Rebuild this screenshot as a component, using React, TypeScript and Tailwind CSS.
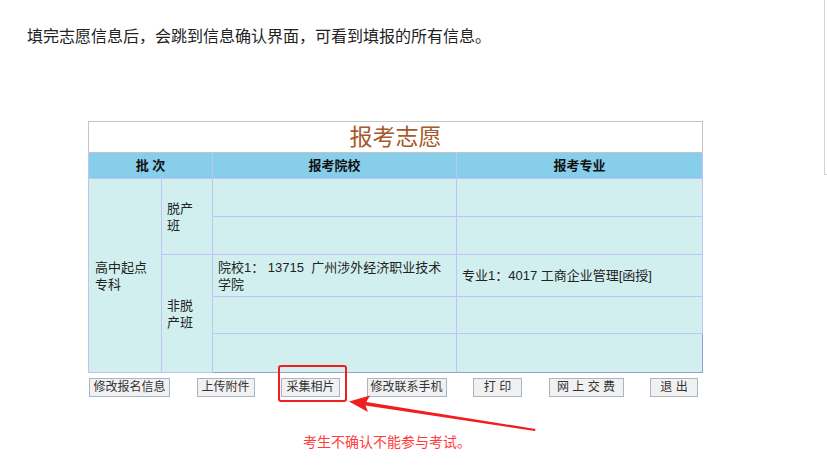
const cjk = '"Liberation Sans", "Noto Sans CJK SC", sans-serif';

const buttons = ["修改报名信息", "上传附件", "采集相片", "修改联系手机", "打 印", "网 上 交 费", "退 出"];
const widths = ["w-[81px]", "w-[58px]", "w-[59px]", "w-[80px]", "w-[49px]", "w-[75px]", "w-[48px]"];

const cell = "border border-[#c2c2f6] align-middle";

export default function App() {
  return (
    <div className="relative h-[476px] w-[827px] overflow-hidden bg-white" style={{ fontFamily: cjk }}>
      {/* page divider on the right */}
      <div className="absolute left-[824px] top-0 h-[175px] w-[3px] border-b border-l border-[#d2d2d2]" />

      <p className="pl-[27px] pt-[27px] text-[16px] leading-[20px] text-[#222]">
        填完志愿信息后，会跳到信息确认界面，可看到填报的所有信息。
      </p>

      <div className="ml-[88px] mt-[74px] w-[614px]">
        <table className="w-[614px] table-fixed border-collapse border border-[#a9a9c9] text-[13px] leading-[17px] text-[#222]">
          <colgroup>
            <col className="w-[73px]" />
            <col className="w-[51px]" />
            <col className="w-[244px]" />
            <col className="w-[246px]" />
          </colgroup>
          <tbody>
            <tr className="h-[31px] bg-white">
              <td colSpan={4} className="border border-[#c4c4c4] text-center text-[23px] leading-[30px] text-[#a5592c]">
                报考志愿
              </td>
            </tr>
            <tr className="h-[26px] bg-[#87ceeb] font-bold text-[#111]">
              <td colSpan={2} className={`${cell} text-center`}>批 次</td>
              <td className={`${cell} text-center`}>报考院校</td>
              <td className={`${cell} text-center`}>报考专业</td>
            </tr>
            <tr className="h-[38px] bg-[#d2efef]">
              <td rowSpan={5} className={`${cell} px-[6px]`}>高中起点专科</td>
              <td rowSpan={2} className={`${cell} px-[5px]`}>
                <span className="block w-[28px]">脱产班</span>
              </td>
              <td className={cell} />
              <td className={cell} />
            </tr>
            <tr className="h-[38px] bg-[#d2efef]">
              <td className={cell} />
              <td className={cell} />
            </tr>
            <tr className="h-[42px] bg-[#d2efef]">
              <td rowSpan={3} className={`${cell} px-[5px]`}>
                <span className="block w-[28px]">非脱产班</span>
              </td>
              <td className={`${cell} px-[5px]`}>院校1： 13715&nbsp; 广州涉外经济职业技术学院</td>
              <td className={`${cell} px-[5px]`}>专业1：4017 工商企业管理[函授]</td>
            </tr>
            <tr className="h-[37px] bg-[#d2efef]">
              <td className={cell} />
              <td className={cell} />
            </tr>
            <tr className="h-[39px] bg-[#d2efef]">
              <td className={`${cell} border-b-[#9b9bd6]`} />
              <td className={`${cell} border-b-[#9b9bd6] border-r-[#9b9bd6]`} />
            </tr>
          </tbody>
        </table>

        <div className="ml-px mt-[5px] flex w-[609px] justify-between">
          {buttons.map((b, i) => (
            <button
              key={b}
              className={`${widths[i]} h-[19px] border border-[#a7b6c6] bg-[#f1f1f1] text-center text-[12px] leading-[17px] text-[#333]`}
            >
              {b}
            </button>
          ))}
        </div>
      </div>

      <p className="mt-[35px] pl-[303px] text-[14px] leading-[20px] text-[#ff3b3b]">考生不确认不能参与考试。</p>

      {/* annotation: red frame and arrow */}
      <div className="absolute left-[278px] top-[365px] h-[37px] w-[69px] rounded-[3px] border-2 border-[#f01e1e]" />
      <svg className="absolute left-0 top-0" width="827" height="476" viewBox="0 0 827 476">
        <polygon points="349,401.5 368,412 365.5,405.5 535,431 535.5,429 366.3,402 370,395.5" fill="#f01e1e" />
      </svg>
    </div>
  );
}
